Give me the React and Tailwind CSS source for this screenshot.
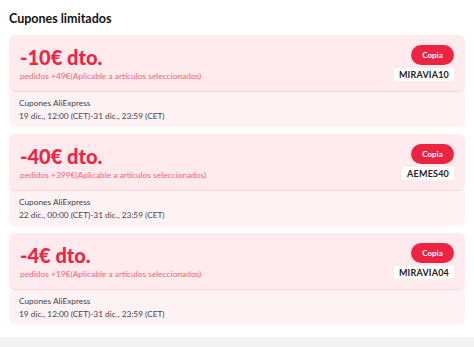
const coupons = [
  { amount: "-10€ dto.", min: "pedidos +49€(Aplicable a artículos seleccionados)", code: "MIRAVIA10", dates: "19 dic., 12:00 (CET)-31 dic., 23:59 (CET)" },
  { amount: "-40€ dto.", min: "pedidos +399€(Aplicable a artículos seleccionados)", code: "AEMES40", dates: "22 dic., 00:00 (CET)-31 dic., 23:59 (CET)" },
  { amount: "-4€ dto.", min: "pedidos +19€(Aplicable a artículos seleccionados)", code: "MIRAVIA04", dates: "19 dic., 12:00 (CET)-31 dic., 23:59 (CET)" },
];

function Coupon({ coupon }) {
  return <div className="flex flex-col">
    <div className="flex h-[57px] items-start justify-between rounded-[6px] border-b border-[#fbd5dc] bg-[#ffebee] pl-[11px] pr-[11px]">
      <div className="pt-[11px]">
        <div className="text-[20px] font-black leading-[22px] text-[#ee2445]">{coupon.amount}</div>
        <div className="mt-[3px] text-[8.4px] leading-[10px] text-[#f0647a]">{coupon.min}</div>
      </div>
      <div className="flex flex-col items-end pt-[10px]">
        <button className="h-[20px] w-[43px] rounded-full bg-[#ec2341] text-[8px] font-bold text-white">Copia</button>
        <div className="mt-[3px] bg-white px-[5px] text-[9px] font-bold leading-[13px] tracking-[0.2px] text-[#222]">{coupon.code}</div>
      </div>
    </div>
    <div className="h-[35px] rounded-b-[6px] bg-[#fff2f5] pl-[10px] pt-[5px] text-[8.3px] leading-[13px] text-[#444]">
      <div>Cupones AliExpress</div>
      <div>{coupon.dates}</div>
    </div>
  </div>;
}

export default function App() {
  return <div className="flex h-[347px] w-[474px] flex-col bg-white font-['Lato',sans-serif]">
    <div className="px-[9px] pt-[11px]">
      <h2 className="text-[12.5px] font-bold leading-[15px] text-[#111]">Cupones limitados</h2>
      <div className="mt-[9px] flex flex-col gap-[7px]">
        {coupons.map((c) => <Coupon key={c.code} coupon={c}/>)}
      </div>
    </div>
    <div className="mt-auto h-[10px] bg-[#f2f2f2]"/>
  </div>;
}
